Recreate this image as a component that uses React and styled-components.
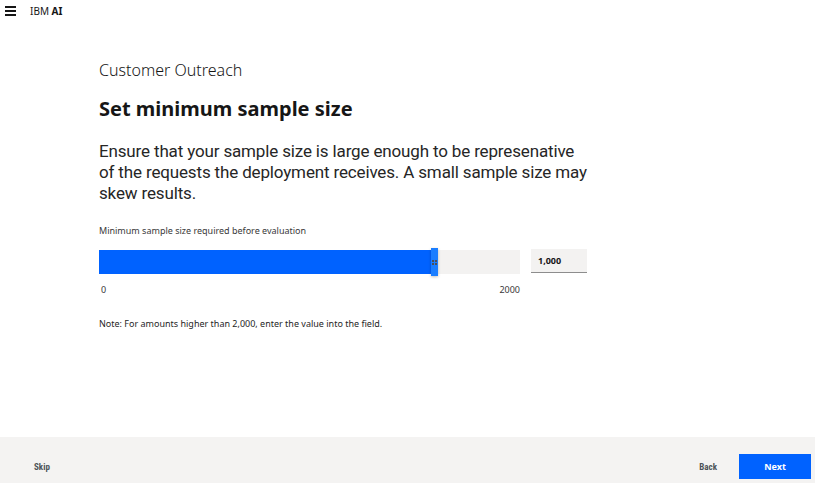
import React from 'react';
import styled, { createGlobalStyle } from 'styled-components';

const GlobalStyle = createGlobalStyle`
  html, body {
    margin: 0;
    padding: 0;
    background: #ffffff;
    font-family: 'Noto Sans', 'Open Sans', sans-serif;
    color: #161616;
  }
  *, *::before, *::after {
    box-sizing: border-box;
  }
`;

const Page = styled.div`
  width: 815px;
  height: 483px;
  display: flex;
  flex-direction: column;
  overflow: hidden;
`;

const Header = styled.header`
  height: 22px;
  flex-shrink: 0;
  display: flex;
  align-items: center;
  padding-left: 5px;
  gap: 13px;
`;

const Brand = styled.span`
  font-size: 10px;
  color: #161616;
  b {
    font-weight: 700;
  }
`;

const Main = styled.main`
  flex: 1;
  min-height: 0;
  padding: 38px 0 0 99px;
`;

const Eyebrow = styled.div`
  font-size: 16px;
  font-weight: 300;
  line-height: 20px;
`;

const Title = styled.h1`
  margin: 16px 0 0;
  font-size: 20px;
  font-weight: 700;
  line-height: 26px;
`;

const Lead = styled.p`
  margin: 19px 0 0;
  width: 490px;
  font-family: Roboto, 'Noto Sans', sans-serif;
  font-size: 17px;
  letter-spacing: -0.15px;
  font-weight: 400;
  line-height: 21px;
  color: #262626;
`;

const FieldLabel = styled.div`
  margin-top: 20px;
  font-size: 9px;
  color: #393939;
`;

const SliderRow = styled.div`
  margin-top: 13px;
  display: flex;
  align-items: center;
  gap: 11px;
`;

const SliderCol = styled.div`
  width: 421px;
`;

const Track = styled.div`
  position: relative;
  height: 24px;
  background: #f3f2f1;
`;

const Fill = styled.div`
  height: 100%;
  background: #0062ff;
`;

const Handle = styled.div`
  position: absolute;
  top: -2px;
  width: 7px;
  height: 28px;
  margin-left: -1px;
  background: #1a7dff;
  box-shadow: 0 1px 3px rgba(0, 0, 0, 0.25);
  display: grid;
  grid-template-columns: repeat(2, 2px);
  grid-auto-rows: 2px;
  gap: 1px;
  align-content: center;
  justify-content: center;
  span {
    background: #4a4f58;
  }
`;

const Scale = styled.div`
  margin-top: 9px;
  display: flex;
  justify-content: space-between;
  font-size: 9px;
  color: #393939;
  padding-left: 2px;
`;

const NumberBox = styled.div`
  width: 56px;
  height: 24px;
  background: #f3f2f1;
  border-bottom: 1px solid #8d8d8d;
  display: flex;
  align-items: center;
  padding-left: 7px;
  font-size: 9px;
  font-weight: 700;
  margin-top: -24px;
`;

const Note = styled.div`
  margin-top: 21px;
  font-size: 9px;
  color: #262626;
`;

const Footer = styled.footer`
  height: 46px;
  flex-shrink: 0;
  background: #f4f3f2;
  display: flex;
  align-items: flex-end;
  padding: 0 4px 4px 34px;
`;

const TextButton = styled.button`
  border: 0;
  background: transparent;
  font-family: 'Roboto Condensed', 'Liberation Sans Narrow', 'Noto Sans', sans-serif;
  font-size: 9px;
  font-weight: 700;
  color: #4d5358;
  padding: 0;
  height: 25px;
  cursor: pointer;
`;

const Spacer = styled.div`
  flex: 1;
`;

const PrimaryButton = styled.button`
  width: 72px;
  height: 25px;
  border: 0;
  background: #0062ff;
  color: #ffffff;
  font-family: 'Noto Sans', sans-serif;
  font-size: 9px;
  font-weight: 700;
  margin-left: 22px;
`;

const MenuIcon = () => (
  <svg width="12" height="10" viewBox="0 0 12 10">
    <rect x="0" y="0" width="11" height="2" fill="#161616" />
    <rect x="0" y="4" width="11" height="2" fill="#161616" />
    <rect x="0" y="8" width="11" height="2" fill="#161616" />
  </svg>
);

export default function App() {
  const value = 1000;
  const pct = (333 / 421) * 100;
  return (
    <Page>
      <GlobalStyle />
      <Header>
        <MenuIcon />
        <Brand>
          IBM <b>AI</b>
        </Brand>
      </Header>
      <Main>
        <Eyebrow>Customer Outreach</Eyebrow>
        <Title>Set minimum sample size</Title>
        <Lead>
          Ensure that your sample size is large enough to be represenative of the requests the
          deployment receives. A small sample size may skew results.
        </Lead>
        <FieldLabel>Minimum sample size required before evaluation</FieldLabel>
        <SliderRow>
          <SliderCol>
            <Track>
              <Fill style={{ width: `${pct}%` }} />
              <Handle style={{ left: `${pct}%` }}>
                <span />
                <span />
                <span />
                <span />
              </Handle>
            </Track>
            <Scale>
              <span>0</span>
              <span>2000</span>
            </Scale>
          </SliderCol>
          <NumberBox>{value.toLocaleString('en-US')}</NumberBox>
        </SliderRow>
        <Note>Note: For amounts higher than 2,000, enter the value into the field.</Note>
      </Main>
      <Footer>
        <TextButton>Skip</TextButton>
        <Spacer />
        <TextButton>Back</TextButton>
        <PrimaryButton>Next</PrimaryButton>
      </Footer>
    </Page>
  );
}
